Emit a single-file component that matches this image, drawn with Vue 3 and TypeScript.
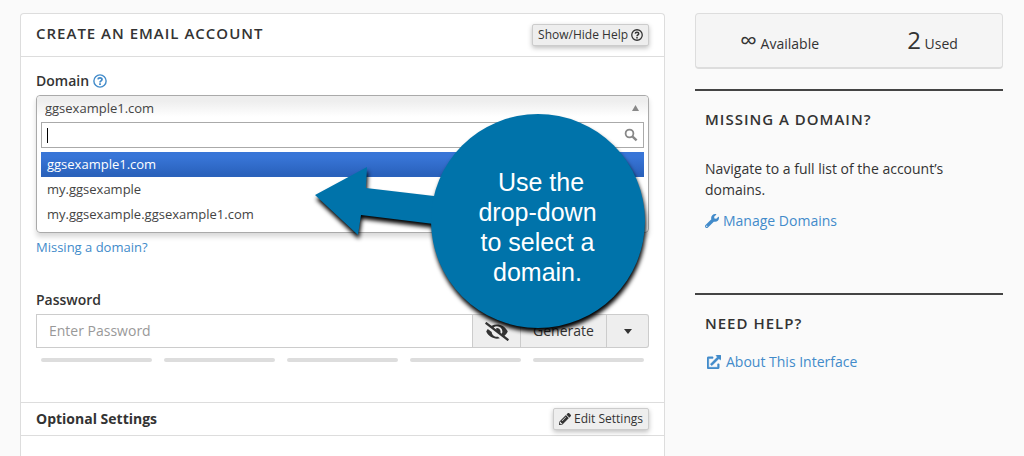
<script setup lang="ts">
import { onMounted, ref } from 'vue'

const domains = ['ggsexample1.com', 'my.ggsexample', 'my.ggsexample.ggsexample1.com']
const selected = ref(domains[0])
const search = ref('')
const password = ref('')
const searchBox = ref<HTMLInputElement | null>(null)

onMounted(() => searchBox.value?.focus())
</script>

<template>
  <div class="page">
    <main class="panel">
      <header class="panel-head">
        <h1 class="title">CREATE AN EMAIL ACCOUNT</h1>
        <button type="button" class="small-btn">
          Show/Hide Help
          <svg class="icon-12" viewBox="0 0 16 16" fill="none" stroke="currentColor" aria-hidden="true">
            <circle cx="8" cy="8" r="7" stroke-width="1.7" />
            <path d="M5.7 6.2C5.9 3.6 10.3 3.7 10.3 6.3C10.3 7.9 8 7.8 8 9.7" stroke-width="2" />
            <path d="M8 10.6V12.5" stroke-width="2" />
          </svg>
        </button>
      </header>

      <form class="form" @submit.prevent>
        <div class="label-row">
          <label for="domain">Domain</label>
          <button type="button" class="help" aria-label="Domain help">
            <svg class="icon-14" viewBox="0 0 16 16" fill="none" stroke="currentColor" aria-hidden="true">
              <circle cx="8" cy="8" r="7" stroke-width="1.6" />
              <path d="M5.7 6.2C5.9 3.6 10.3 3.7 10.3 6.3C10.3 7.9 8 7.8 8 9.7" stroke-width="2" />
              <path d="M8 10.6V12.5" stroke-width="2" />
            </svg>
          </button>
        </div>

        <div class="combo">
          <div class="combo-head">
            <select id="domain" v-model="selected">
              <option v-for="d in domains" :key="d">{{ d }}</option>
            </select>
            <svg class="arrow-up" viewBox="0 0 7 6" aria-hidden="true"><path d="M0 6L3.5 0L7 6Z" fill="#888" /></svg>
          </div>
          <div class="search">
            <input ref="searchBox" v-model="search" type="text" aria-label="Search domains" />
            <svg class="icon-14" viewBox="0 0 14 14" fill="none" stroke="#888" aria-hidden="true">
              <circle cx="5.5" cy="5.5" r="3.9" stroke-width="1.8" />
              <path d="M8.6 8.6L12.6 12.4" stroke-width="2.4" />
            </svg>
          </div>
          <ul class="options" role="listbox" aria-label="Domain">
            <li
              v-for="d in domains"
              :key="d"
              role="option"
              :aria-selected="d === selected"
              :class="{ active: d === selected }"
              @click="selected = d"
            >{{ d }}</li>
          </ul>
        </div>
        <a href="#" class="missing">Missing a domain?</a>

        <label for="password" class="pw-label">Password</label>
        <div class="group">
          <input id="password" v-model="password" type="password" placeholder="Enter Password" />
          <button type="button" class="eye" aria-label="Show password">
            <svg viewBox="0 0 640 512" fill="currentColor" aria-hidden="true">
              <path d="M320 400c-75.85 0-137.25-58.71-142.9-133.11L72.2 185.82c-13.79 17.3-26.48 35.59-36.72 55.59a32.35 32.35 0 0 0 0 29.19C89.71 376.41 197.07 448 320 448c26.91 0 52.87-4 77.89-10.46L346 397.39a144.13 144.13 0 0 1-26 2.61zm313.82 58.1l-110.55-85.44a331.25 331.25 0 0 0 81.25-102.07 32.35 32.35 0 0 0 0-29.19C550.29 135.59 442.93 64 320 64a308.15 308.15 0 0 0-147.32 37.7L45.46 3.37A16 16 0 0 0 23 6.18L3.37 31.45A16 16 0 0 0 6.18 53.9l588.36 454.73a16 16 0 0 0 22.46-2.81l19.64-25.27a16 16 0 0 0-2.82-22.45zm-183.72-142l-39.3-30.38A94.75 94.75 0 0 0 416 256a94.76 94.76 0 0 0-121.31-92.21A47.65 47.65 0 0 1 304 192a46.64 46.64 0 0 1-1.54 10l-73.61-56.89A142.31 142.31 0 0 1 320 112a143.92 143.92 0 0 1 144 144c0 21.63-5.29 41.79-13.9 60.11z" />
            </svg>
          </button>
          <button type="button" class="generate">Generate</button>
          <button type="button" class="more" aria-label="Password options">
            <svg viewBox="0 0 8 5" aria-hidden="true"><path d="M0 0H8L4 5Z" fill="currentColor" /></svg>
          </button>
        </div>
        <div class="meter" aria-hidden="true">
          <span v-for="n in 5" :key="n"></span>
        </div>
      </form>

      <section class="optional">
        <h2>Optional Settings</h2>
        <button type="button" class="small-btn">
          <svg class="icon-12" viewBox="0 0 512 512" fill="currentColor" aria-hidden="true">
            <path d="M497.9 142.1l-46.1 46.1c-4.7 4.7-12.3 4.7-17 0l-111-111c-4.7-4.7-4.7-12.3 0-17l46.1-46.1c18.7-18.7 49.1-18.7 67.9 0l60.1 60.1c18.8 18.7 18.8 49.1 0 67.9zM284.2 99.8L21.6 362.4.4 483.9c-2.9 16.4 11.4 30.6 27.8 27.8l121.5-21.3 262.6-262.6c4.7-4.7 4.7-12.3 0-17l-111-111c-4.8-4.7-12.4-4.7-17.1 0zM124.1 339.9c-5.5-5.5-5.5-14.3 0-19.8l154-154c5.5-5.5 14.3-5.5 19.8 0s5.5 14.3 0 19.8l-154 154c-5.5 5.5-14.3 5.5-19.8 0zM88 424h48v36.3l-64.5 11.3-31.1-31.1L51.7 376H88v48z" />
          </svg>
          Edit Settings
        </button>
      </section>

      <div class="callout">
        <svg viewBox="0 0 331 215" aria-hidden="true">
          <path d="M0 81L52 53L51 74L119 82V110L46 101L43 121Z" fill="#0073aa" />
          <circle cx="223" cy="107" r="107" fill="#0073aa" />
        </svg>
        <p>&nbsp;Use the<br />drop-down<br />to select a<br />domain.</p>
      </div>
    </main>

    <aside class="side">
      <div class="stats">
        <span><strong>∞</strong> Available</span>
        <span><strong>2</strong> Used</span>
      </div>
      <section class="info tall">
        <h2 class="title">MISSING A DOMAIN?</h2>
        <p>Navigate to a full list of the account’s domains.</p>
        <a href="#">
          <svg class="icon-14" viewBox="0 0 512 512" fill="currentColor" aria-hidden="true">
            <path d="M507.73 109.1c-2.24-9.03-13.54-12.09-20.12-5.51l-74.36 74.36-67.88-11.31-11.31-67.88 74.36-74.36c6.62-6.62 3.43-17.9-5.66-20.16-47.38-11.74-99.55.91-136.58 37.93-39.64 39.64-50.55 97.1-34.05 147.2L18.74 402.76c-24.99 24.99-24.99 65.51 0 90.5 24.99 24.99 65.51 24.99 90.5 0l213.21-213.21c50.12 16.71 107.47 5.68 147.37-34.22 37.07-37.07 49.7-89.32 37.91-136.73zM64 472c-13.25 0-24-10.75-24-24 0-13.26 10.75-24 24-24s24 10.74 24 24c0 13.25-10.75 24-24 24z" />
          </svg>
          Manage Domains
        </a>
      </section>
      <section class="info">
        <h2 class="title">NEED HELP?</h2>
        <a href="#" class="external">
          <svg class="icon-14" viewBox="0 0 512 512" fill="currentColor" stroke="currentColor" stroke-width="16" aria-hidden="true">
            <path d="M432 320H400a16 16 0 0 0-16 16V448H64V128H208a16 16 0 0 0 16-16V80a16 16 0 0 0-16-16H48A48 48 0 0 0 0 112V464a48 48 0 0 0 48 48H400a48 48 0 0 0 48-48V336A16 16 0 0 0 432 320ZM488 0h-128c-21.37 0-32.05 25.91-17 41l35.73 35.73L135 320.37a24 24 0 0 0 0 34L157.67 377a24 24 0 0 0 34 0L435.28 133.32 471 169c15 15 41 4.5 41-17V24A24 24 0 0 0 488 0Z" />
          </svg>
          About This Interface
        </a>
      </section>
    </aside>
  </div>
</template>

<style>
body {
  background: #fafafa;
}
</style>

<style scoped>
* {
  box-sizing: border-box;
  margin: 0;
}
.page {
  display: grid;
  grid-template-columns: 645fr 308fr;
  gap: 30px;
  min-height: 100vh;
  padding: 13px 21px 0 20px;
  font: 14px/20px "Open Sans", "Noto Sans", sans-serif;
  color: #333;
}
button,
input,
select {
  font: inherit;
  color: inherit;
}
button {
  cursor: pointer;
}
svg {
  display: block;
  flex: none;
}
a {
  color: #428bca;
  text-decoration: none;
}
.icon-12 {
  width: 12px;
  height: 12px;
}
.icon-14 {
  width: 14px;
  height: 14px;
}
.title {
  font-size: 15px;
  font-weight: 600;
  line-height: 20px;
  letter-spacing: 1px;
}
.panel {
  position: relative;
  background: #fff;
  border: 1px solid #ddd;
  border-bottom: 0;
  border-radius: 4px 4px 0 0;
}
.panel-head {
  display: flex;
  justify-content: space-between;
  align-items: flex-start;
  height: 43px;
  padding: 9px 15px 0;
  border-bottom: 1px solid #ddd;
}
.small-btn {
  display: flex;
  align-items: center;
  gap: 3px;
  height: 22px;
  margin-top: 1px;
  padding: 0 5px;
  border: 1px solid #ccc;
  border-radius: 2px;
  background: #eee;
  font-size: 12px;
  line-height: 18px;
  box-shadow: 0 2px 5px rgba(0, 0, 0, 0.26);
}
.form {
  padding: 14px 15px 40px;
}
.label-row {
  display: flex;
  align-items: center;
  gap: 4px;
  margin-bottom: 4px;
  font-weight: 600;
}
.help {
  padding: 0;
  border: 0;
  background: none;
  color: #428bca;
}
.combo {
  padding-bottom: 5px;
  border: 1px solid #aaa;
  border-radius: 4px;
  font-size: 13px;
  color: #444;
  box-shadow: 0 4px 5px rgba(0, 0, 0, 0.15);
}
.combo-head {
  display: flex;
  align-items: center;
  padding: 0 9px 2px 0;
  border-radius: 4px 4px 0 0;
  background: linear-gradient(#eee 20%, #fff 80%);
}
.combo-head select {
  flex: 1;
  height: 24px;
  padding: 0 8px;
  border: 0;
  outline: 0;
  appearance: none;
  background: none;
}
.arrow-up {
  width: 7px;
  height: 6px;
}
.search {
  display: flex;
  align-items: center;
  height: 26px;
  margin: 0 4px 4px;
  padding: 0 5px;
  border: 1px solid #aaa;
  background: #fff;
}
.search:focus-within::before {
  content: "";
  width: 1px;
  height: 15px;
  background: #000;
}
.search input {
  flex: 1;
  min-width: 0;
  height: 20px;
  padding: 0;
  border: 0;
  outline: 0;
  background: none;
  caret-color: transparent;
}
.options {
  padding: 0 4px;
  list-style: none;
}
.options li {
  padding: 0 6px;
  line-height: 25px;
}
.options .active {
  background: linear-gradient(#3875d7 20%, #2a62bc 90%);
  color: #fff;
}
.missing {
  display: block;
  margin-top: 4px;
  font-size: 13px;
}
.pw-label {
  display: block;
  margin: 33px 0 4px;
  font-weight: 600;
}
.group {
  display: flex;
  height: 34px;
}
.group input {
  flex: 1;
  min-width: 0;
  padding: 0 12px;
  border: 1px solid #ccc;
  outline: 0;
  background: #fff;
}
.group input::placeholder {
  color: #999;
  opacity: 1;
}
.group button {
  display: flex;
  align-items: center;
  justify-content: center;
  padding: 0 12px;
  border: 1px solid #ccc;
  border-left: 0;
  background: #eee;
}
.eye {
  width: 48px;
}
.eye svg {
  width: 24px;
  height: 19px;
}
.generate {
  width: 86px;
}
.more {
  width: 42px;
  border-radius: 0 3px 3px 0;
}
.more svg {
  width: 8px;
  height: 5px;
}
.meter {
  display: flex;
  gap: 12px;
  padding: 10px 5px 0;
}
.meter span {
  flex: 1;
  height: 4px;
  border-radius: 2px;
  background: #ddd;
}
.optional {
  display: flex;
  align-items: flex-start;
  justify-content: space-between;
  height: 34px;
  padding: 5px 15px 0;
  border: solid #ddd;
  border-width: 1px 0;
}
.optional h2 {
  padding-top: 1px;
  font-size: 14px;
  font-weight: 700;
  line-height: 20px;
}
.optional .small-btn {
  margin: 0;
}
.callout {
  position: absolute;
  top: 100px;
  right: 18px;
  width: 331px;
  height: 215px;
  pointer-events: none;
}
.callout svg {
  width: 331px;
  height: 215px;
  overflow: visible;
  filter: drop-shadow(1px 4px 2px #000);
}
.callout p {
  position: absolute;
  inset: 53px 0 0 114px;
  color: #fff;
  font: 25px/30px "Liberation Sans", Arial, sans-serif;
  text-align: center;
}
.stats {
  display: flex;
  justify-content: space-around;
  height: 56px;
  padding-top: 9px;
  border: 1px solid #ddd;
  border-bottom-width: 2px;
  border-radius: 4px;
  background: #f5f5f5;
  line-height: 34px;
}
.stats strong {
  font-size: 24px;
  font-weight: 400;
}
.info {
  margin-top: 20px;
  padding: 18px 10px 0;
  border-top: 2px solid #444;
}
.tall {
  height: 184px;
}
.info p {
  margin: 29px 0 11px;
  line-height: 21px;
}
.info a {
  display: flex;
  align-items: center;
  gap: 4px;
}
.info .external {
  gap: 5px;
  margin-top: 19px;
  padding-left: 2px;
}
</style>
